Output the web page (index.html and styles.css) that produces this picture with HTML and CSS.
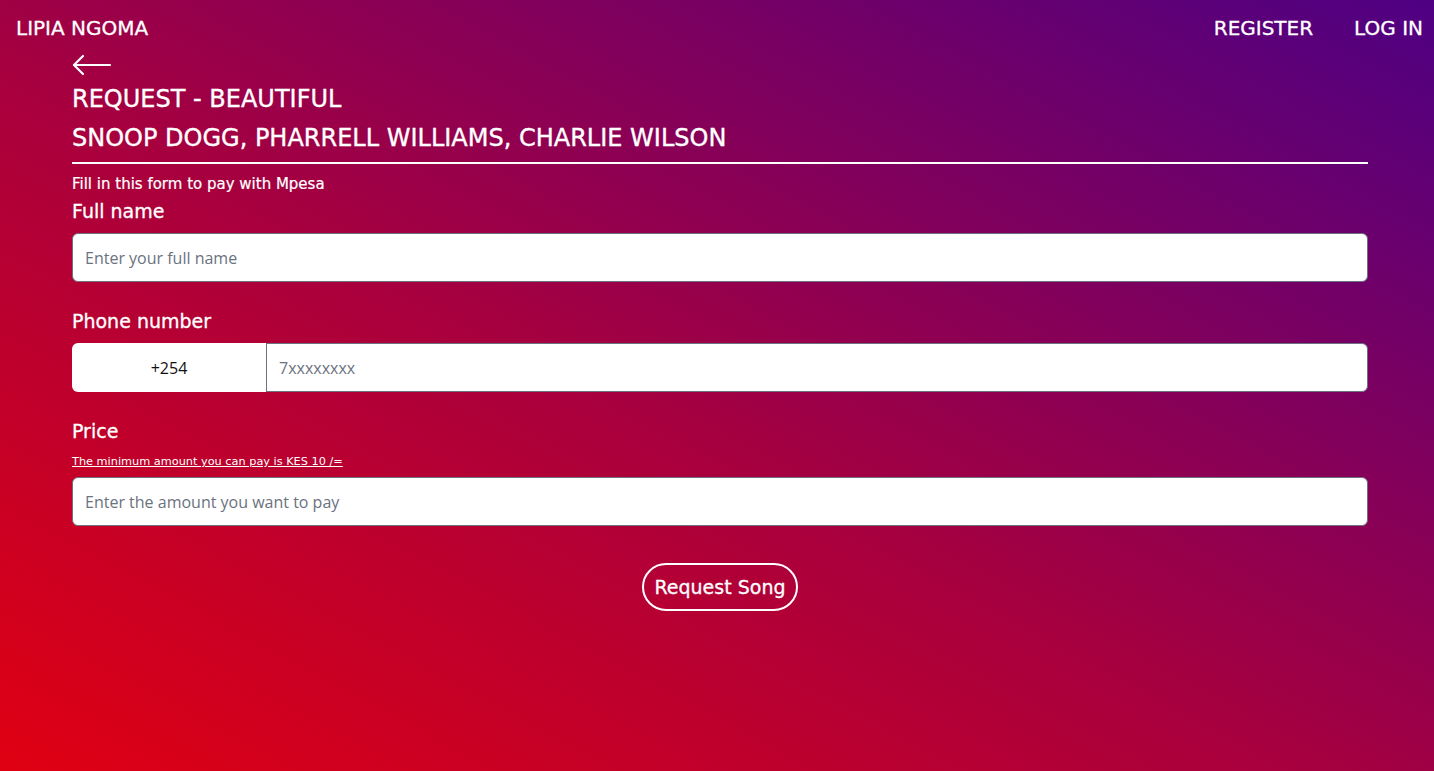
FILE: index.html
```html
<!DOCTYPE html>
<html lang="en">
<head>
<meta charset="utf-8">
<title>Lipia Ngoma - Request</title>
<link rel="stylesheet" href="styles.css">
</head>
<body>
<div class="page">
  <nav class="nav">
    <a class="brand" href="#">LIPIA NGOMA</a>
    <div class="nav-links">
      <a href="#">REGISTER</a>
      <a href="#">LOG IN</a>
    </div>
  </nav>
  <main class="container">
    <a class="back" href="#" aria-label="Back">
      <svg width="40" height="22" viewBox="0 0 40 22" fill="none" stroke="#fff" stroke-width="2.2" stroke-linecap="round" stroke-linejoin="round">
        <path d="M38 11H2"/>
        <path d="M11 2L2 11L11 20"/>
      </svg>
    </a>
    <h1 class="title">REQUEST - BEAUTIFUL</h1>
    <h2 class="artists">SNOOP DOGG, PHARRELL WILLIAMS, CHARLIE WILSON</h2>
    <hr class="rule">
    <p class="intro">Fill in this form to pay with Mpesa</p>
    <form class="form">
      <div class="field">
        <label class="label">Full name</label>
        <input class="input" type="text" placeholder="Enter your full name">
      </div>
      <div class="field">
        <label class="label">Phone number</label>
        <div class="group">
          <span class="prefix">+254</span>
          <input class="input input-phone" type="text" placeholder="7xxxxxxxx">
        </div>
      </div>
      <div class="field">
        <label class="label">Price</label>
        <a class="hint" href="#">The minimum amount you can pay is KES 10 /=</a>
        <input class="input" type="text" placeholder="Enter the amount you want to pay">
      </div>
      <div class="actions">
        <button class="btn" type="button">Request Song</button>
      </div>
    </form>
  </main>
</div>
</body>
</html>
```

FILE: styles.css
```css
* { box-sizing: border-box; }
html, body { margin: 0; padding: 0; height: 100%; }
body {
  font-family: "DejaVu Sans", "Open Sans", sans-serif;
  color: #fff;
  background: linear-gradient(to top right, #e00012 0%, #a8003e 45%, #4e0083 100%);
  min-height: 771px;
}
.page { min-height: 771px; }
.nav {
  display: flex;
  justify-content: space-between;
  align-items: center;
  height: 56px;
  padding: 0 11px 0 16px;
}
.nav a {
  color: #fff;
  text-decoration: none;
  font-size: 20px;
  -webkit-text-stroke: 0.3px #fff;
}
.brand { font-size: 21px; }
.nav-links { display: flex; gap: 41px; }
.container {
  margin: -2px 66px 0 72px;
}
.back { display: block; width: 40px; height: 22px; line-height: 0; }
.title {
  margin: 7px 0 0;
  font-size: 24px;
  font-weight: normal;
  line-height: 32px;
  -webkit-text-stroke: 0.35px #fff;
}
.artists {
  margin: 7px 0 0;
  font-size: 24px;
  font-weight: normal;
  line-height: 32px;
  -webkit-text-stroke: 0.35px #fff;
}
.rule {
  border: 0;
  border-top: 2px solid #fff;
  margin: 8px 0 0;
}
.intro {
  margin: 10px 0 0;
  font-size: 15px;
  line-height: 20px;
  -webkit-text-stroke: 0.2px #fff;
}
.form { display: flex; flex-direction: column; }
.field { display: flex; flex-direction: column; margin-bottom: 25px; }
.label {
  font-size: 19px;
  line-height: 28px;
  margin-bottom: 8px;
  -webkit-text-stroke: 0.3px #fff;
}
.field:first-child { margin-top: 3px; }
.input {
  height: 49px;
  width: 100%;
  border: 1px solid #6b7280;
  border-radius: 6px;
  background: #fff;
  padding: 0 12px;
  font-family: "Open Sans", "Noto Sans", sans-serif;
  font-size: 16px;
  color: #111;
}
.input::placeholder { color: #6b7280; }
.group { display: flex; }
.prefix {
  flex: 0 0 194px;
  height: 49px;
  background: #fff;
  color: #111;
  border-radius: 6px 0 0 6px;
  display: flex;
  align-items: center;
  justify-content: center;
  font-family: "Open Sans", "Noto Sans", sans-serif;
  font-size: 16px;
}
.input-phone { border-radius: 0 6px 6px 0; }
.hint {
  color: #fff;
  font-size: 11.3px;
  text-decoration: underline;
  margin: 1px 0 7px;
  line-height: 16px;
}
.actions { display: flex; justify-content: center; margin-top: 12px; }
.btn {
  height: 48px;
  padding: 0 10px;
  border: 2px solid #fff;
  border-radius: 24px;
  background: transparent;
  color: #fff;
  font-family: "DejaVu Sans", "Open Sans", sans-serif;
  font-size: 19px;
  -webkit-text-stroke: 0.3px #fff;
  cursor: pointer;
}
```
